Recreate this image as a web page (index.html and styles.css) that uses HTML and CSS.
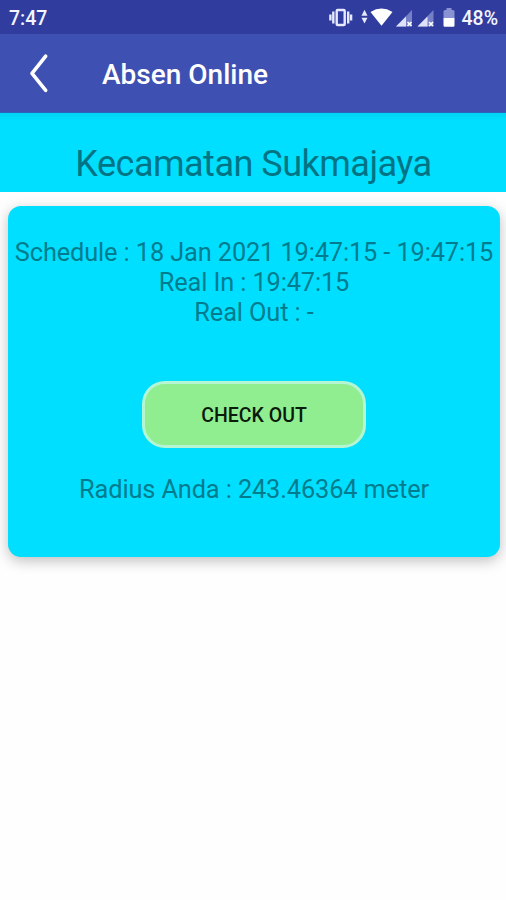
FILE: index.html
```html
<!DOCTYPE html>
<html lang="id">
<head>
  <meta charset="UTF-8">
  <meta name="viewport" content="width=device-width, initial-scale=1.0">
  <title>Absen Online</title>
  <link rel="stylesheet" href="styles.css">
</head>
<body>
  <!-- Status bar -->
  <div class="status-bar">
    <span class="clock">7:47</span>
    <svg class="status-icons" width="130" height="34" viewBox="0 0 130 34">
      <!-- Vibrate -->
      <g fill="none" stroke="#e6e9ff" stroke-width="2.4">
        <rect x="7.7" y="10" width="8" height="15" rx="1" />
        <path d="M4.3 11.5v12M19.2 11.5v12M1.4 14.5v6M22.1 14.5v6" />
      </g>
      <!-- Data arrows -->
      <path d="M32.500 15.800l3-6 3 6zM32.500 17.800l3 5.800 3-5.800z" fill="#e6e8fb" />
      <!-- Wifi -->
      <path d="M41.500 12q11-6.800 22 0L52.500 25.700z" fill="#fff" />
      <!-- Signal -->
      <path d="M67 26.500L83 10v16.500z" fill="#7580c6" />
      <path d="M67 26.500l10-10v10z" fill="#dfe2f7" />
      <path d="M78.500 22l4 4m0-4l-4 4" stroke="#fff" stroke-width="1.7" />
      <path d="M88.500 26.500L104.500 10v16.500z" fill="#7580c6" />
      <path d="M88.500 26.500l10-10v10z" fill="#dfe2f7" />
      <path d="M100 22l4 4m0-4l-4 4" stroke="#fff" stroke-width="1.7" />
      <!-- Battery -->
      <path d="M114.500 18v-6.500q0-1.500 1.500-1.500h1.500v-2h5v2h1.500q1.500 0 1.500 1.500v6.500z" fill="#8992d2" />
      <path d="M114.500 18h11v7.500q0 1.200-1.200 1.200h-8.600q-1.200 0-1.200-1.200z" fill="#fff" />
    </svg>
    <span class="battery">48%</span>
  </div>

  <!-- App bar -->
  <div class="app-bar">
    <svg class="back" width="20" height="40" viewBox="0 0 20 40">
      <path d="M16.7 3.2L3 20.300 16.700 37.300" fill="none" stroke="#fff" stroke-width="3.6" stroke-linecap="round" stroke-linejoin="round" />
    </svg>
    <h1 class="title">Absen Online</h1>
  </div>

  <h2 class="location">Kecamatan Sukmajaya</h2>

  <!-- Attendance card -->
  <div class="card">
    <p class="info">Schedule : 18 Jan 2021 19:47:15 - 19:47:15</p>
    <p class="info">Real In : 19:47:15</p>
    <p class="info">Real Out : -</p>
    <button class="check-button">CHECK OUT</button>
    <p class="info">Radius Anda : 243.46364 meter</p>
  </div>
</body>
</html>
```

FILE: styles.css
```css
* {
  box-sizing: border-box;
}

body {
  margin: 0;
  height: 900px;
  font-family: Roboto, "Liberation Sans", sans-serif;
  background: #fefefe;
  overflow: hidden;
}

.status-bar {
  display: flex;
  align-items: center;
  height: 34px;
  padding: 0 8px 0 9px;
  background: #303d9e;
  color: #f4f5ff;
  font-size: 19.5px;
  font-weight: 500;
}

.clock,
.battery {
  padding-top: 2px;
}

.status-icons {
  margin-left: auto;
  margin-right: 2px;
}

.app-bar {
  display: flex;
  align-items: center;
  height: 79px;
  padding-left: 29px;
  background: #3f50b3;
  border-bottom: 1px solid #2b62bd;
}

.title {
  margin: 2px 0 0 53px;
  color: white;
  font-size: 28px;
  font-weight: 500;
}

.location {
  height: 79px;
  margin: 0;
  padding: 30px 0 0 1px;
  background: linear-gradient(#00d4f4, #00dfff 8px);
  color: #007485;
  font-size: 36px;
  font-weight: 400;
  letter-spacing: -0.5px;
  line-height: 42px;
  text-align: center;
}

.card {
  display: flex;
  flex-direction: column;
  align-items: center;
  width: 492px;
  height: 351px;
  margin: 14px 0 0 8px;
  padding-top: 32px;
  background: #00dfff;
  border-radius: 13px;
  box-shadow: 0 4px 14px rgba(0, 0, 0, 0.25);
}

.info {
  margin: 0;
  color: #007c8e;
  font-size: 25.3px;
  letter-spacing: -0.1px;
  line-height: 29.8px;
  white-space: nowrap;
}

.check-button {
  width: 224px;
  height: 67px;
  margin: 54px 0 27px;
  padding-top: 3px;
  background: #90ee90;
  color: #0c1a0c;
  border: 3px solid #b4f6d4;
  border-radius: 23px;
  font-family: inherit;
  font-size: 19.5px;
  font-weight: 500;
}
```
